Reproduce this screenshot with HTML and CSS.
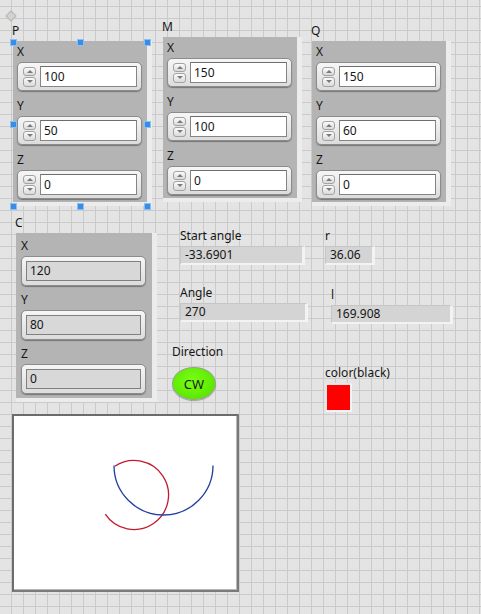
FILE: index.html
```html
<!DOCTYPE html>
<html>
<head>
<meta charset="utf-8">
<link rel="stylesheet" href="styles.css">
</head>
<body>
<div class="panel">
  <div class="diamond"></div>

  <div class="group g-p">
    <div class="glabel">P</div>
    <div class="cluster">
      <div class="flabel">X</div>
      <div class="num"><div class="spin"><span class="up"></span><span class="dn"></span></div><div class="val">100</div></div>
      <div class="flabel">Y</div>
      <div class="num"><div class="spin"><span class="up"></span><span class="dn"></span></div><div class="val">50</div></div>
      <div class="flabel">Z</div>
      <div class="num"><div class="spin"><span class="up"></span><span class="dn"></span></div><div class="val">0</div></div>
    </div>
  </div>

  <div class="group g-m">
    <div class="glabel">M</div>
    <div class="cluster">
      <div class="flabel">X</div>
      <div class="num"><div class="spin"><span class="up"></span><span class="dn"></span></div><div class="val">150</div></div>
      <div class="flabel">Y</div>
      <div class="num"><div class="spin"><span class="up"></span><span class="dn"></span></div><div class="val">100</div></div>
      <div class="flabel">Z</div>
      <div class="num"><div class="spin"><span class="up"></span><span class="dn"></span></div><div class="val">0</div></div>
    </div>
  </div>

  <div class="group g-q">
    <div class="glabel">Q</div>
    <div class="cluster">
      <div class="flabel">X</div>
      <div class="num"><div class="spin"><span class="up"></span><span class="dn"></span></div><div class="val">150</div></div>
      <div class="flabel">Y</div>
      <div class="num"><div class="spin"><span class="up"></span><span class="dn"></span></div><div class="val">60</div></div>
      <div class="flabel">Z</div>
      <div class="num"><div class="spin"><span class="up"></span><span class="dn"></span></div><div class="val">0</div></div>
    </div>
  </div>

  <div class="handles">
    <span class="h h1"></span><span class="h h2"></span><span class="h h3"></span>
    <span class="h h4"></span><span class="h h5"></span>
    <span class="h h6"></span><span class="h h7"></span><span class="h h8"></span>
  </div>

  <div class="group g-c">
    <div class="glabel">C</div>
    <div class="cluster cluster-c">
      <div class="flabel">X</div>
      <div class="ind"><div class="ival">120</div></div>
      <div class="flabel">Y</div>
      <div class="ind"><div class="ival">80</div></div>
      <div class="flabel">Z</div>
      <div class="ind"><div class="ival">0</div></div>
    </div>
  </div>

  <div class="group g-start">
    <div class="slabel">Start angle</div>
    <div class="flat w-start">-33.6901</div>
  </div>
  <div class="group g-angle">
    <div class="slabel">Angle</div>
    <div class="flat w-angle">270</div>
  </div>
  <div class="group g-r">
    <div class="slabel">r</div>
    <div class="flat w-r">36.06</div>
  </div>
  <div class="group g-l">
    <div class="slabel">l</div>
    <div class="flat w-l">169.908</div>
  </div>

  <div class="group g-dir">
    <div class="slabel dir-label">Direction</div>
    <div class="btn-cw">CW</div>
  </div>

  <div class="group g-color">
    <div class="slabel">color(black)</div>
    <div class="swatch"></div>
  </div>

  <div class="group g-graph">
    <div class="graph">
      <svg width="223" height="174" viewBox="14 416 223 174">
        <path d="M105.3 514.1 A34.5 34.5 0 1 0 114.9 466.3" fill="none" stroke="#c4192f" stroke-width="1.3"/>
        <path d="M114 465.5 A49.5 49.5 0 0 0 213 465.5" fill="none" stroke="#2340a0" stroke-width="1.3"/>
      </svg>
    </div>
  </div>
</div>
</body>
</html>
```
FILE: styles.css
```css
html {
  background-color: #e4e4e4;
  background-image:
    linear-gradient(90deg, #cacaca 1px, transparent 1px),
    linear-gradient(#cacaca 1px, transparent 1px);
  background-size: 12px 12px;
  background-position: 11px 0, 0 6px;
}
body {
  margin: 0;
  font-family: "Noto Sans", "Liberation Sans", sans-serif;
  font-size: 12px;
  color: #161616;
}
.panel {
  position: relative;
  width: 481px;
  height: 614px;
  overflow: hidden;
}
.group { position: absolute; }

.diamond {
  position: absolute;
  left: 7px;
  top: 12px;
  width: 6px;
  height: 6px;
  background: #d2d2d2;
  border: 1px solid #b4b4b4;
  transform: rotate(45deg);
}

/* clusters */
.g-p { left: 13px; top: 24px; }
.g-m { left: 163px; top: 20px; }
.g-q { left: 312px; top: 24px; }
.g-c { left: 16px; top: 216px; }

.glabel {
  line-height: 14px;
  height: 14px;
  margin-left: -1px;
  margin-bottom: 3px;
}
.cluster {
  width: 125px;
  padding: 4px 5px 3px 4px;
  background: #b4b4b4;
  border-right: 5px solid #ececec;
  border-bottom: 4px solid #ececec;
  display: flex;
  flex-direction: column;
}
.flabel {
  line-height: 14px;
  height: 14px;
  margin-bottom: 3px;
}
.num {
  box-sizing: border-box;
  width: 125px;
  height: 29px;
  border: 1px solid #8c8c8c;
  border-radius: 5px;
  background: linear-gradient(#f6f6f6, #dcdcdc);
  box-shadow: 0 1px 1px rgba(0,0,0,0.35);
  display: flex;
  align-items: center;
  padding-left: 5px;
  gap: 4px;
  margin-bottom: 8px;
}
.num:last-child, .ind:last-child { margin-bottom: 0; }
.spin {
  width: 13px;
  height: 20px;
  display: flex;
  flex-direction: column;
  gap: 1px;
}
.spin span {
  box-sizing: border-box;
  flex: 1;
  border: 1px solid #a2a2a2;
  border-radius: 3px;
  background: linear-gradient(#fbfbfb, #dadada);
  display: flex;
  align-items: center;
  justify-content: center;
}
.spin span::after {
  content: "";
  width: 0;
  height: 0;
  border-left: 3px solid transparent;
  border-right: 3px solid transparent;
}
.spin .up::after { border-bottom: 3px solid #7a7a7a; }
.spin .dn::after { border-top: 3px solid #7a7a7a; }
.val {
  box-sizing: border-box;
  width: 97px;
  height: 21px;
  background: #ffffff;
  border: 1px solid #858585;
  border-top-color: #6e6e6e;
  padding-left: 3px;
  line-height: 19px;
}

.cluster-c {
  width: 125px;
  padding: 6px 6px 4px 5px;
}
.ind {
  box-sizing: border-box;
  width: 125px;
  height: 30px;
  border: 1px solid #8c8c8c;
  border-radius: 5px;
  background: linear-gradient(#f6f6f6, #dcdcdc);
  box-shadow: 0 1px 1px rgba(0,0,0,0.35);
  padding: 4px;
  margin-bottom: 7px;
}
.ival {
  box-sizing: border-box;
  height: 20px;
  background: #d8d8d8;
  border: 1px solid #808080;
  padding-left: 3px;
  line-height: 18px;
}

/* selection handles */
.handles {
  position: absolute;
  left: 10px;
  top: 39px;
  width: 141px;
  height: 171px;
}
.h {
  position: absolute;
  width: 5px;
  height: 5px;
  background: #3a8de6;
  border: 1px solid #8cc0f2;
}
.h1 { left: 0; top: 0; }
.h2 { left: 67px; top: 0; }
.h3 { left: 134px; top: 0; }
.h4 { left: 0; top: 82px; }
.h5 { left: 134px; top: 82px; }
.h6 { left: 0; top: 164px; }
.h7 { left: 67px; top: 164px; }
.h8 { left: 134px; top: 164px; }

/* flat indicators */
.slabel {
  line-height: 14px;
  height: 14px;
  margin-bottom: 3px;
  white-space: nowrap;
}
.flat {
  box-sizing: border-box;
  height: 19px;
  line-height: 16px;
  padding-left: 4px;
  background: #d4d4d4;
  border-top: 1px solid #c6c6c6;
  border-left: 1px solid #c6c6c6;
  border-right: 3px solid #f3f3f3;
  border-bottom: 2px solid #f3f3f3;
}
.g-start { left: 180px; top: 229px; }
.g-angle { left: 180px; top: 286px; }
.g-r { left: 325px; top: 229px; }
.g-l { left: 331px; top: 288px; }
.w-start { width: 125px; }
.w-angle { width: 128px; }
.w-r { width: 50px; }
.w-l { width: 122px; }

/* direction button */
.g-dir { left: 172px; top: 345px; }
.dir-label { margin-bottom: 8px; }
.btn-cw {
  box-sizing: border-box;
  width: 44px;
  height: 33px;
  border-radius: 50%;
  background: radial-gradient(ellipse at 45% 40%, #78ff14, #5ce600 75%, #52cc00);
  border: 1px solid #93a58a;
  box-shadow: 0 1px 1px rgba(0,0,0,0.3);
  display: flex;
  align-items: center;
  justify-content: center;
  font-size: 13px;
  color: #1c1c1c;
}

/* color box */
.g-color { left: 325px; top: 366px; }
.swatch {
  box-sizing: border-box;
  width: 27px;
  height: 29px;
  background: #ff0000;
  border: 2px solid #f5f5f5;
  border-top-color: #e6e6e6;
  border-left-color: #e6e6e6;
}

/* graph */
.g-graph { left: 12px; top: 414px; }
.graph {
  width: 223px;
  height: 174px;
  background: #ffffff;
  border-top: 2px solid #6c6c6c;
  border-left: 2px solid #6c6c6c;
  border-right: 2px solid #7a7a7a;
  border-bottom: 2px solid #7a7a7a;
  box-shadow: inset -1px -1px 0 #b8b8b8;
}
.graph svg { display: block; }
```
